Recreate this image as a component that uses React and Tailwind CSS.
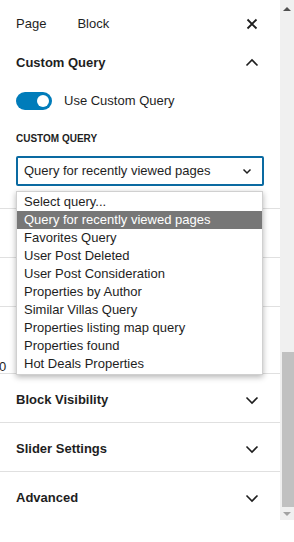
import React from "react";

const Chevron = ({ up = false }) => (
  <svg width="24" height="24" viewBox="0 0 24 24" className="shrink-0">
    {up ? (
      <path d="M6.5 14.5 12 9l5.5 5.5" fill="none" stroke="#1e1e1e" strokeWidth="1.6" />
    ) : (
      <path d="M17.5 9.5 12 15l-5.5-5.5" fill="none" stroke="#1e1e1e" strokeWidth="1.6" />
    )}
  </svg>
);

const Panel = ({ title }) => (
  <div className="flex h-[49px] items-center justify-between border-t border-[#e0e0e0] pt-[5px] pl-4 pr-4">
    <span className="text-[13px] font-semibold text-[#1e1e1e]">{title}</span>
    <Chevron />
  </div>
);

const options = [
  "Select query...",
  "Query for recently viewed pages",
  "Favorites Query",
  "User Post Deleted",
  "User Post Consideration",
  "Properties by Author",
  "Similar Villas Query",
  "Properties listing map query",
  "Properties found",
  "Hot Deals Properties",
];

export default function App() {
  return (
    <div
      className="flex h-[542px] w-[294px] bg-white text-[#1e1e1e]"
      style={{ fontFamily: '"Liberation Sans", Arial, sans-serif' }}
    >
      <div className="relative w-[280px]">
        {/* header */}
        <div className="flex h-[47px] items-center pl-4 pr-4">
          <span className="text-[13px]">Page</span>
          <span className="ml-[31px] text-[13px]">Block</span>
          <svg width="24" height="24" viewBox="0 0 24 24" className="ml-auto">
            <path d="M7.5 7.5l9 9M16.5 7.5l-9 9" stroke="#1e1e1e" strokeWidth="1.8" />
          </svg>
        </div>
        {/* custom query panel */}
        <div className="pb-[22px]">
          <div className="flex h-[31px] items-center justify-between pl-4 pr-4">
            <span className="text-[13px] font-semibold">Custom Query</span>
            <Chevron up />
          </div>
          <div className="mt-[13px] flex items-center pl-4">
            <div className="flex h-[18px] w-[36px] items-center justify-end rounded-full bg-[#007cba] pr-[3px]">
              <div className="h-[12px] w-[12px] rounded-full bg-white" />
            </div>
            <span className="ml-[12px] text-[13px]">Use Custom Query</span>
          </div>
          <div className="mt-[23px] pl-4 text-[10px] font-semibold uppercase leading-none">
            Custom Query
          </div>
          <div className="mx-4 mt-[12px] flex h-[30px] items-center justify-between rounded-[2px] border-2 border-[#0a6aa1] pl-[6px] pr-[8px]">
            <span className="text-[13px]">Query for recently viewed pages</span>
            <svg width="14" height="14" viewBox="0 0 14 14">
              <path d="M3.5 5.5 7 9l3.5-3.5" fill="none" stroke="#1e1e1e" strokeWidth="1.5" />
            </svg>
          </div>
        </div>
        <div className="h-[49px] border-t border-[#e0e0e0]" />
        <div className="h-[49px] border-t border-[#e0e0e0]" />
        <div className="flex h-[67px] items-end border-t border-[#e0e0e0]">
          <span className="mb-[1px] ml-[-1px] text-[13px] leading-[10px]">0</span>
        </div>
        <Panel title="Block Visibility" />
        <Panel title="Slider Settings" />
        <Panel title="Advanced" />

        {/* open dropdown */}
        <div className="absolute left-4 top-[191px] w-[247px] border border-[#d0d0d0] bg-white py-px shadow-[0_2px_6px_rgba(0,0,0,0.3)]">
          {options.map((o, i) => (
            <div
              key={o}
              className={
                i === 1
                  ? "flex h-[18px] items-center bg-[#777777] pl-[7px] text-[13px] text-white"
                  : "flex h-[18px] items-center pl-[7px] text-[13px] text-[#1e1e1e]"
              }
            >
              {o}
            </div>
          ))}
        </div>
      </div>
      {/* scrollbar */}
      <div className="flex h-[520px] w-[14px] flex-col bg-[#f0f0f0]">
        <div className="flex h-[17px] items-center justify-center">
          <div className="h-0 w-0 border-x-[4px] border-b-[4px] border-x-transparent border-b-[#505050]" />
        </div>
        <div className="mt-[335px] ml-[2px] h-[155px] bg-[#c1c1c1]" />
        <div className="flex flex-1 items-center justify-center">
          <div className="h-0 w-0 border-x-[4px] border-t-[4px] border-x-transparent border-t-[#a3a3a3]" />
        </div>
      </div>
    </div>
  );
}
